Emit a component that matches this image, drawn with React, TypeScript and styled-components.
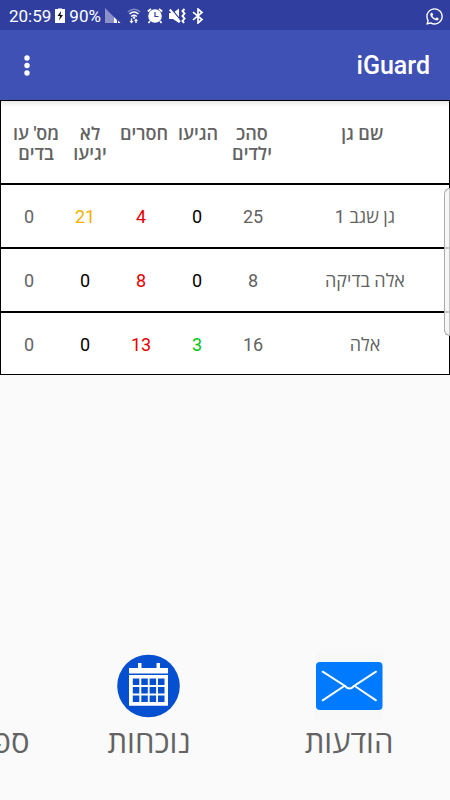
import React from 'react';
import styled, { createGlobalStyle } from 'styled-components';
import { FaWhatsapp } from 'react-icons/fa';

const GlobalStyle = createGlobalStyle`
  *, *::before, *::after { box-sizing: border-box; }
  body {
    margin: 0;
    background: #fafafa;
    color: #636363;
    font-family: Roboto, 'Open Sans', 'Noto Sans', sans-serif;
  }
`;

const Screen = styled.div`
  position: relative;
  display: flex;
  flex-direction: column;
  min-height: 100vh;
  overflow: hidden;
`;

const StatusBar = styled.header`
  display: flex;
  align-items: center;
  justify-content: space-between;
  height: 30px;
  padding: 2px 6px 0 9px;
  background: #303f9f;
  color: #fff;
  font-size: 17px;
  line-height: 20px;
`;

const StatusGroup = styled.div`
  display: flex;
  align-items: center;
  gap: 4px;
`;

const StatusIcons = styled.div`
  display: flex;
  align-items: center;
  gap: 6px;
`;

const StatusIcon = styled.svg`
  display: block;
  flex: none;
`;

const AppBar = styled.div`
  display: flex;
  align-items: center;
  justify-content: space-between;
  height: 70px;
  padding: 2px 20px 0 15px;
  background: #3f51b5;
  color: #fff;
`;

const MenuButton = styled.button`
  display: flex;
  justify-content: center;
  width: 24px;
  padding: 8px 0;
  border: 0;
  background: none;
  color: inherit;
`;

const Title = styled.h1`
  margin: 0;
  font-size: 25px;
  font-weight: 500;
  line-height: 32px;
`;

const Table = styled.table`
  display: block;
  background: #fff;
  font-size: 18px;
  line-height: 20px;
`;

const TableHead = styled.thead`
  display: block;
`;

const TableBody = styled.tbody`
  display: block;
`;

const Row = styled.tr<{ $head?: boolean }>`
  display: grid;
  grid-template-columns: minmax(0, 3fr) repeat(5, minmax(0, 1fr));
  align-items: ${({ $head }) => ($head ? 'start' : 'center')};
  height: ${({ $head }) => ($head ? 84 : 64)}px;
  padding: ${({ $head }) => ($head ? '23px 8px 0' : '2px 0 0')};
  border: 1px solid #000;
  background: ${({ $head }) =>
    $head ? 'linear-gradient(#e8e8e8, #fff 6px)' : '#fff'};

  ${TableBody} &:last-child {
    height: 63px;
  }
`;

const HeadCell = styled.th`
  display: flex;
  justify-content: center;
  padding: 0;
  font-size: 18px;
  font-weight: 600;
  text-align: center;
  white-space: pre;
`;

const Cell = styled.td<{ $color?: string }>`
  padding: 0;
  color: ${({ $color }) => $color ?? 'inherit'};
  text-align: center;
`;

const EdgeHandle = styled.div`
  position: absolute;
  top: 188px;
  right: 0;
  width: 6px;
  height: 148px;
  border: 1px solid #aaa;
  border-right: 0;
  border-radius: 6px 0 0 6px;
  background: rgba(245, 245, 245, 0.8);
`;

const BottomNav = styled.nav`
  display: flex;
  margin-top: auto;
  padding: 0 1px 37px 0;
  overflow: hidden;
`;

const NavButton = styled.button`
  display: flex;
  flex: none;
  flex-direction: column;
  align-items: center;
  gap: 3px;
  width: 200px;
  padding: 0;
  border: 0;
  background: none;
  color: #636363;
  font: 400 31px/40px Roboto, 'Open Sans', 'Noto Sans', sans-serif;
  white-space: nowrap;
`;

const NavIcon = styled.svg`
  display: block;
  width: 68px;
  height: 68px;
`;

const columns = ['שם גן ', 'סהכ\nילדים', 'הגיעו', 'חסרים', 'לא\nיגיעו', "מס' עו\nבדים"];

const rows = [
  { name: 'גן שגב 1', total: 25, arrived: 0, missing: 4, absent: 21, staff: 0 },
  { name: 'אלה בדיקה', total: 8, arrived: 0, missing: 8, absent: 0, staff: 0 },
  { name: 'אלה', total: 16, arrived: 3, missing: 13, absent: 0, staff: 0 },
];

const tint = (value: number, color: string) => (value > 0 ? color : '#000');

const Battery = () => (
  <StatusIcon width="10" height="16" viewBox="0 0 10 16" aria-label="Charging">
    <path d="M3 0h4v1H3z" fill="#a5acd6" />
    <path d="M0 1h10v14H0z" fill="#fff" />
    <path d="M6 3 2.500 8H5L4 12.500 8 7H5.500z" fill="#111" />
  </StatusIcon>
);

const Signal = () => (
  <StatusIcon width="16" height="16" viewBox="0 0 16 16" aria-label="Signal">
    <path d="M0 0 9 9v6H0z" fill="#8991c8" />
    <path d="M9 9l3 3v3H9zM13 12.500l2.500 2.500H13z" fill="#fff" />
  </StatusIcon>
);

const Wifi = () => (
  <StatusIcon width="14" height="16" viewBox="0 0 14 16" fill="none" aria-label="Wi-Fi">
    <path d="M.8 4Q7-1.500 13.200 4" stroke="#7f89c4" strokeWidth="1.500" />
    <path d="M2.500 6Q7 2 11.500 6M4.200 8.500Q7 6 9.800 8.500" stroke="#fff" strokeWidth="1.500" />
    <circle cx="7" cy="9.500" r="1.300" fill="#fff" />
    <path d="M4.500 10.500v3M9 12v3" stroke="#fff" strokeWidth="1.400" />
    <path d="M2.500 13h4l-2 2.500zM7 13h4l-2-2.500z" fill="#fff" />
  </StatusIcon>
);

const Alarm = () => (
  <StatusIcon width="16" height="16" viewBox="0 0 16 16" fill="none" aria-label="Alarm">
    <path d="M.8 3.500 4 .8M15.200 3.500 12 .8M3 13l-1.500 2M13 13l1.500 2" stroke="#fff" strokeWidth="1.700" />
    <circle cx="8" cy="8" r="6.800" fill="#fff" />
    <path d="M8 4v4.500h3.500" stroke="#303f9f" strokeWidth="1.200" />
  </StatusIcon>
);

const Muted = () => (
  <StatusIcon width="17" height="16" viewBox="0 0 17 16" fill="none" aria-label="Vibrate">
    <path d="M0 5h4l6-4.500v14.500L4 11H0z" fill="#fff" />
    <path d="M2 .5 12 12.500" stroke="#303f9f" strokeWidth="1.200" />
    <path d="M.8 1.500 11 14" stroke="#fff" strokeWidth="2" />
    <path d="m15.500 1-2 2 2 2.500-2 2.500 2 2.500-2 2.500 1.500 2" stroke="#fff" strokeWidth="2" />
  </StatusIcon>
);

const Bluetooth = () => (
  <StatusIcon width="12" height="16" viewBox="0 0 12 16" fill="none" aria-label="Bluetooth">
    <path d="m1 4.200 9 7.300L6 15V1l4 3.500-9 7.300" stroke="#fff" strokeWidth="1.700" />
  </StatusIcon>
);

const Envelope = () => (
  <NavIcon viewBox="0 0 68 68" fill="none" aria-hidden="true">
    <path d="M0 0h68v68H0z" fill="#f8f8f8" />
    <rect x="1" y="10" width="66.500" height="48" rx="4" fill="#007bff" />
    <path
      d="M7.700 19.700 30 34Q34.500 39 39 34L61 19.700M7.700 48.300 28.500 34.500M61 48.300 40.500 34.500"
      stroke="#fff"
      strokeWidth="2"
      strokeLinecap="round"
    />
  </NavIcon>
);

const Calendar = () => (
  <NavIcon viewBox="0 0 68 68" aria-hidden="true">
    <circle cx="33.500" cy="34" r="31.300" fill="#0550d0" />
    <path d="M14 16h9v-5h3.500v5h15v-5H45v5h8v5.500H14zM14 23h39v30.700H14z" fill="#fff" />
    {[26.5, 35, 43.5].map((y) =>
      [17.8, 26.3, 34.6, 43].map((x) => (
        <rect key={`${x}-${y}`} x={x} y={y} width="6.500" height="6.500" fill="#0550d0" />
      )),
    )}
  </NavIcon>
);

const PhoneBook = () => (
  <NavIcon viewBox="0 0 68 68" aria-hidden="true">
    <path d="M14 6h40v56H14z" fill="#0550d0" />
    <circle cx="34" cy="27" r="8" fill="#fff" />
    <path d="M20 49q0-12 14-12t14 12z" fill="#fff" />
  </NavIcon>
);

export default function App() {
  return (
    <Screen dir="rtl" lang="he">
      <GlobalStyle />
      <StatusBar dir="ltr">
        <StatusGroup>
          <span>20:59</span>
          <Battery />
          <span>90%</span>
          <StatusIcons>
            <Signal />
            <Wifi />
            <Alarm />
            <Muted />
            <Bluetooth />
          </StatusIcons>
        </StatusGroup>
        <FaWhatsapp size={19} aria-label="WhatsApp" />
      </StatusBar>
      <AppBar dir="ltr">
        <MenuButton type="button" aria-label="תפריט">
          <svg width="6" height="22" viewBox="0 0 6 22" fill="currentColor">
            <circle cx="3" cy="3" r="2.700" />
            <circle cx="3" cy="10.500" r="2.700" />
            <circle cx="3" cy="18" r="2.700" />
          </svg>
        </MenuButton>
        <Title>iGuard</Title>
      </AppBar>
      <Table>
        <TableHead>
          <Row $head>
            {columns.map((label) => (
              <HeadCell key={label} scope="col">{label}</HeadCell>
            ))}
          </Row>
        </TableHead>
        <TableBody>
          {rows.map((row) => (
            <Row key={row.name}>
              <Cell>{row.name}</Cell>
              <Cell>{row.total}</Cell>
              <Cell $color={tint(row.arrived, '#00c514')}>{row.arrived}</Cell>
              <Cell $color={tint(row.missing, '#e60000')}>{row.missing}</Cell>
              <Cell $color={tint(row.absent, '#f5b000')}>{row.absent}</Cell>
              <Cell>{row.staff}</Cell>
            </Row>
          ))}
        </TableBody>
      </Table>
      <EdgeHandle />
      <BottomNav>
        <NavButton type="button"><Envelope />הודעות</NavButton>
        <NavButton type="button"><Calendar />נוכחות</NavButton>
        <NavButton type="button"><PhoneBook />ספר טלפונים</NavButton>
      </BottomNav>
    </Screen>
  );
}
